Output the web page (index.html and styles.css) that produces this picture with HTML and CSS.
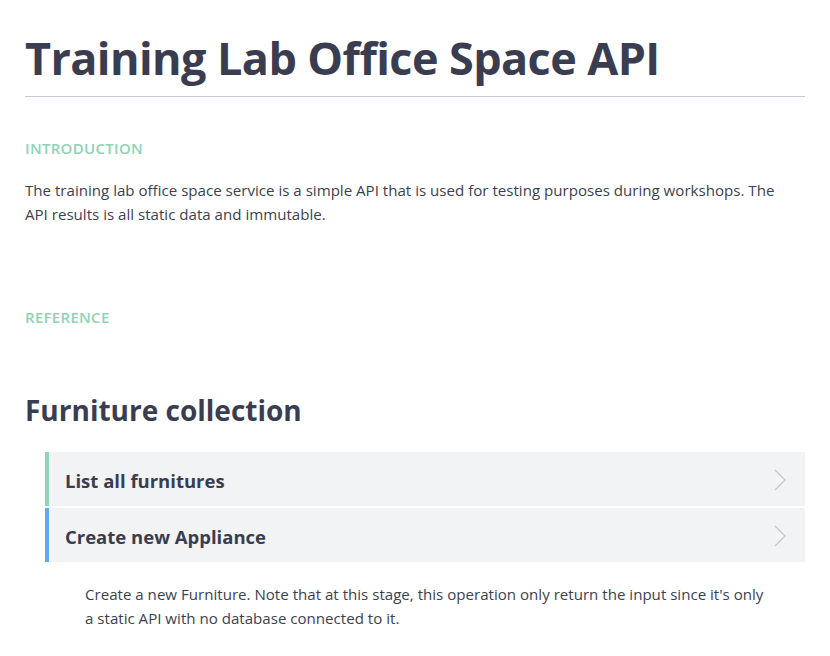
FILE: index.html
```html
<!DOCTYPE html>
<html>
<head>
<meta charset="utf-8">
<link rel="stylesheet" href="styles.css">
</head>
<body>
<main class="doc">
  <h1 class="title">Training Lab Office Space API</h1>
  <section class="intro">
    <h6 class="label">INTRODUCTION</h6>
    <p class="text">The training lab office space service is a simple API that is used for testing purposes during workshops. The API results is all static data and immutable.</p>
  </section>
  <section class="ref">
    <h6 class="label">REFERENCE</h6>
  </section>
  <section class="group">
    <h2 class="group-title">Furniture collection</h2>
    <div class="ops">
      <div class="op op-get">
        <span class="op-name">List all furnitures</span>
        <svg class="chev" width="12" height="22" viewBox="0 0 12 22"><path d="M1 1 L11 11 L1 21" fill="none" stroke="#c3c6d4" stroke-width="1.2"/></svg>
      </div>
      <div class="op op-post">
        <span class="op-name">Create new Appliance</span>
        <svg class="chev" width="12" height="22" viewBox="0 0 12 22"><path d="M1 1 L11 11 L1 21" fill="none" stroke="#c3c6d4" stroke-width="1.2"/></svg>
      </div>
      <p class="op-desc">Create a new Furniture. Note that at this stage, this operation only return the input since it's only a static API with no database connected to it.</p>
    </div>
  </section>
</main>
</body>
</html>
```
FILE: styles.css
```css
html, body {
  margin: 0;
  padding: 0;
  background: #ffffff;
}
body {
  font-family: "Open Sans", "Noto Sans", sans-serif;
  color: #3b3f50;
}
.doc {
  padding: 0 25px;
}
.title {
  margin: 0;
  padding-top: 30px;
  padding-bottom: 10px;
  font-size: 45px;
  line-height: 56px;
  font-weight: 700;
  color: #393d4f;
  border-bottom: 1px solid #c6c8d6;
  letter-spacing: -0.6px;
}
.label {
  margin: 0;
  font-size: 15px;
  line-height: 20px;
  font-weight: 600;
  color: #8dd3b6;
  letter-spacing: 0.3px;
}
.intro {
  padding-top: 41px;
}
.text {
  margin: 20px 0 0;
  max-width: 765px;
  font-size: 15.1px;
  line-height: 24px;
  color: #3b3f50;
}
.ref {
  padding-top: 81px;
}
.group {
  padding-top: 63px;
}
.group-title {
  margin: 0;
  font-size: 28px;
  line-height: 40px;
  font-weight: 700;
  color: #393d4f;
}
.ops {
  margin-top: 22px;
  margin-left: 20px;
  display: flex;
  flex-direction: column;
  gap: 2px;
}
.op {
  height: 54px;
  background: #f2f3f5;
  display: flex;
  align-items: center;
  justify-content: space-between;
  padding: 2px 19px 0 16px;
  box-sizing: border-box;
  border-left: 4px solid #93d3b8;
}
.op-post {
  border-left-color: #5ea8f4;
}
.op-name {
  font-size: 18.5px;
  font-weight: 700;
  color: #393d4f;
}
.chev {
  display: block;
  margin-top: -1px;
}
.op-desc {
  margin: 18px 0 0;
  padding: 0 40px;
  font-size: 15.1px;
  line-height: 24px;
  color: #3b3f50;
}
```
